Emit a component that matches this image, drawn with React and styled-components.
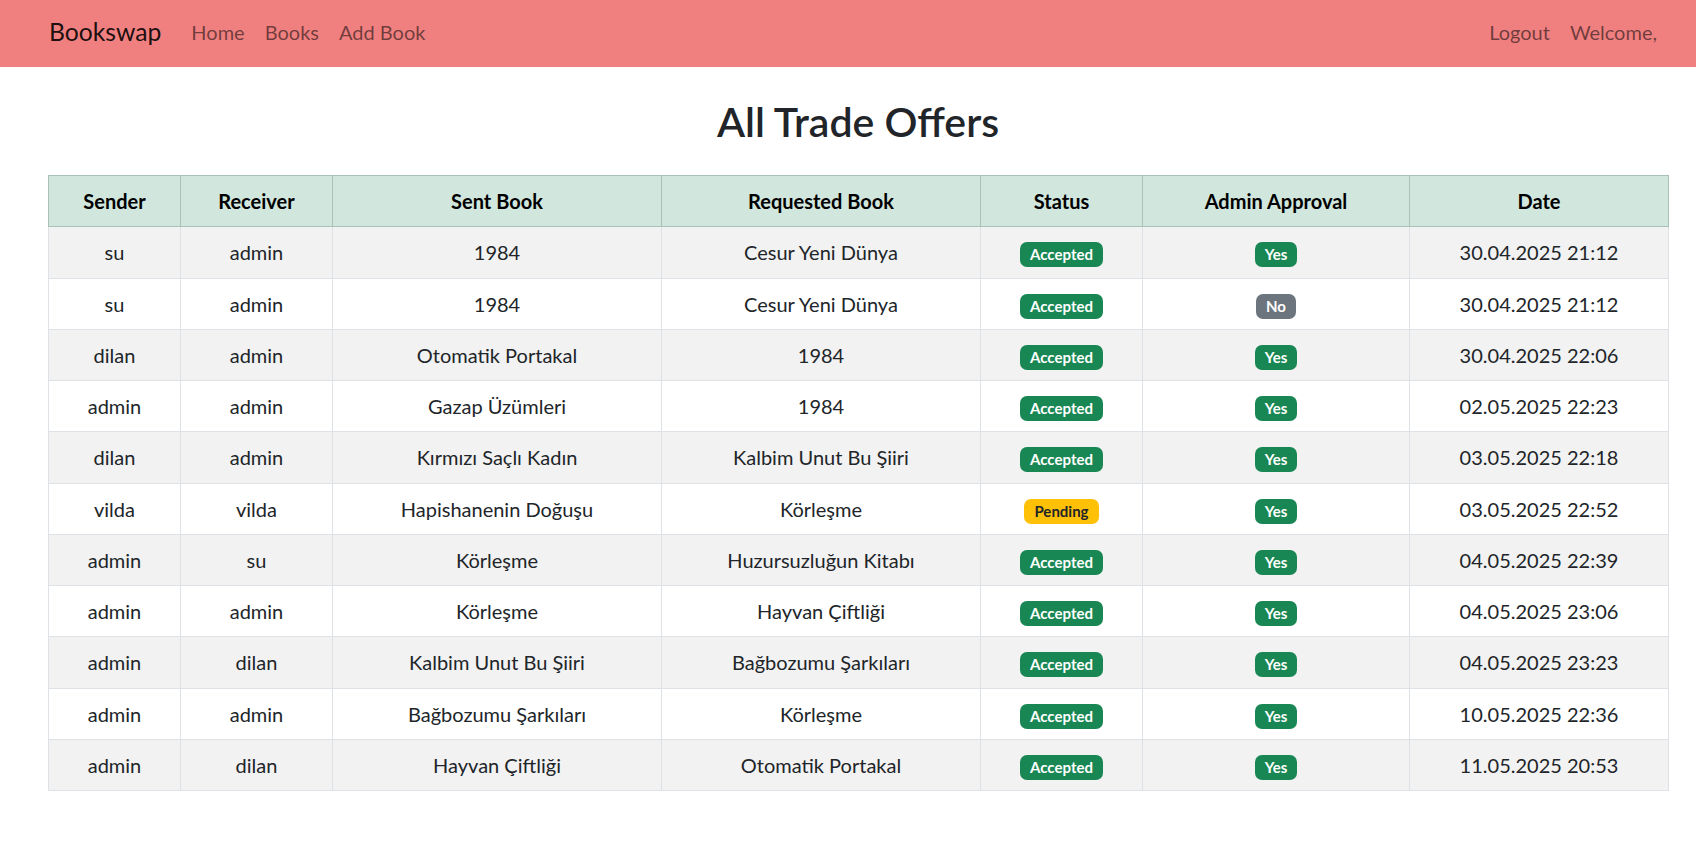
import styled, { createGlobalStyle } from "styled-components"

const GlobalStyle = createGlobalStyle`
    body {
        margin: 0;
        font-family: Lato, "Open Sans", sans-serif;
        color: #212529;
        background: #fff;
    }
`

const offers = [
    ["su", "admin", "1984", "Cesur Yeni Dünya", "Accepted", true, "30.04.2025 21:12"],
    ["su", "admin", "1984", "Cesur Yeni Dünya", "Accepted", false, "30.04.2025 21:12"],
    ["dilan", "admin", "Otomatik Portakal", "1984", "Accepted", true, "30.04.2025 22:06"],
    ["admin", "admin", "Gazap Üzümleri", "1984", "Accepted", true, "02.05.2025 22:23"],
    ["dilan", "admin", "Kırmızı Saçlı Kadın", "Kalbim Unut Bu Şiiri", "Accepted", true, "03.05.2025 22:18"],
    ["vilda", "vilda", "Hapishanenin Doğuşu", "Körleşme", "Pending", true, "03.05.2025 22:52"],
    ["admin", "su", "Körleşme", "Huzursuzluğun Kitabı", "Accepted", true, "04.05.2025 22:39"],
    ["admin", "admin", "Körleşme", "Hayvan Çiftliği", "Accepted", true, "04.05.2025 23:06"],
    ["admin", "dilan", "Kalbim Unut Bu Şiiri", "Bağbozumu Şarkıları", "Accepted", true, "04.05.2025 23:23"],
    ["admin", "admin", "Bağbozumu Şarkıları", "Körleşme", "Accepted", true, "10.05.2025 22:36"],
    ["admin", "dilan", "Hayvan Çiftliği", "Otomatik Portakal", "Accepted", true, "11.05.2025 20:53"],
]

const columns = [
    ["Sender", 132],
    ["Receiver", 152],
    ["Sent Book", 329],
    ["Requested Book", 319],
    ["Status", 162],
    ["Admin Approval", 267],
    ["Date", 259],
]

const Navbar = styled.nav`
    height: 67px;
    background-color: #f08080;
    display: flex;
    align-items: center;
    justify-content: space-between;
    padding: 0 29px 4px 49px;
    box-sizing: border-box;
`

const NavGroup = styled.div`
    display: flex;
    align-items: center;
`

const Brand = styled.a`
    font-size: 24.7px;
    color: rgba(0, 0, 0, 0.9);
    margin-right: 20px;
    text-decoration: none;
`

const NavLink = styled.a`
    font-size: 20px;
    color: rgba(0, 0, 0, 0.55);
    padding: 0 10px;
    text-decoration: none;
    cursor: pointer;
`

const Main = styled.main`
    padding: 0 28px 0 48px;
`

const Title = styled.h1`
    margin: 26px 0 24px;
    font-size: 41px;
    font-weight: 600;
    line-height: 58px;
    text-align: center;
    color: #212529;
`

const Table = styled.table`
    width: 100%;
    table-layout: fixed;
    border-collapse: collapse;
    font-size: 20px;
    line-height: 30.25px;

    th, td {
        padding: 10px;
        text-align: center;
        vertical-align: middle;
    }

    th {
        background-color: #d1e7dd;
        border: 1px solid #a9c2b7;
        color: #000;
        font-weight: 700;
    }

    td {
        border: 1px solid #dee2e6;
        color: #212529;
    }

    tbody tr:nth-child(odd) td {
        background-color: #f2f2f2;
    }
`

const badgeColors = {
    success: ["#198754", "#fff"],
    warning: ["#ffc107", "#212529"],
    secondary: ["#6c757d", "#fff"],
}

const Badge = styled.span`
    display: inline-block;
    font-size: 15px;
    font-weight: 700;
    line-height: 1;
    padding: 5px 10px;
    border-radius: 7px;
    background-color: ${props => badgeColors[props.$tone][0]};
    color: ${props => badgeColors[props.$tone][1]};
`

export default function App() {
    return (
        <>
            <GlobalStyle />
            <Navbar>
                <NavGroup>
                    <Brand>Bookswap</Brand>
                    <NavLink>Home</NavLink>
                    <NavLink>Books</NavLink>
                    <NavLink>Add Book</NavLink>
                </NavGroup>
                <NavGroup>
                    <NavLink>Logout</NavLink>
                    <NavLink>Welcome,</NavLink>
                </NavGroup>
            </Navbar>

            <Main>
                <Title>All Trade Offers</Title>
                <Table>
                    <colgroup>
                        {columns.map(([name, width]) => <col key={name} style={{ width }} />)}
                    </colgroup>
                    <thead>
                        <tr>
                            {columns.map(([name]) => <th key={name}>{name}</th>)}
                        </tr>
                    </thead>
                    <tbody>
                        {offers.map(([sender, receiver, sent, requested, status, approved, date], i) => (
                            <tr key={i}>
                                <td>{sender}</td>
                                <td>{receiver}</td>
                                <td>{sent}</td>
                                <td>{requested}</td>
                                <td>
                                    <Badge $tone={status == "Pending" ? "warning" : "success"}>{status}</Badge>
                                </td>
                                <td>
                                    <Badge $tone={approved ? "success" : "secondary"}>{approved ? "Yes" : "No"}</Badge>
                                </td>
                                <td>{date}</td>
                            </tr>
                        ))}
                    </tbody>
                </Table>
            </Main>
        </>
    )
}
